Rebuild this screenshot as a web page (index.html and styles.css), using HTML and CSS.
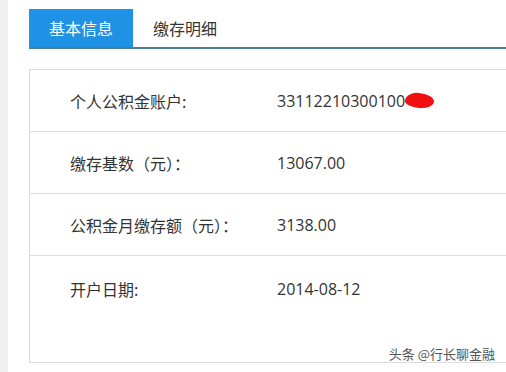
FILE: index.html
```html
<!DOCTYPE html>
<html lang="zh-CN">
<head>
<meta charset="utf-8">
<title>基本信息</title>
<link rel="stylesheet" href="styles.css">
</head>
<body>
<div class="page">
  <div class="strip"></div>
  <main class="main">
    <nav class="tabs">
      <div class="tab active">基本信息</div>
      <div class="tab">缴存明细</div>
    </nav>
    <section class="panel">
      <div class="row">
        <div class="label">个人公积金账户:</div>
        <div class="value">33112210300100<span class="scribble"></span></div>
      </div>
      <div class="row">
        <div class="label">缴存基数（元）：</div>
        <div class="value">13067.00</div>
      </div>
      <div class="row">
        <div class="label">公积金月缴存额（元）：</div>
        <div class="value">3138.00</div>
      </div>
      <div class="row last">
        <div class="label">开户日期:</div>
        <div class="value">2014-08-12</div>
      </div>
      <div class="watermark">头条 @行长聊金融</div>
    </section>
  </main>
</div>
</body>
</html>
```
FILE: styles.css
```css
* { box-sizing: border-box; }
html, body {
  margin: 0;
  padding: 0;
  background: #fff;
  width: 506px;
  height: 372px;
  overflow: hidden;
}
body {
  font-family: "Open Sans", "Noto Sans CJK SC", sans-serif;
  color: #333;
}
.page {
  display: flex;
  height: 372px;
}
.strip {
  width: 8px;
  flex: none;
  background: #efefef;
}
.main {
  flex: 1;
  padding: 9px 0 0 21px;
  overflow: hidden;
}
.tabs {
  display: flex;
  border-bottom: 2px solid #4b7f94;
}
.tab {
  height: 38px;
  padding: 0 20px;
  font-family: "Noto Sans CJK SC", sans-serif;
  font-size: 16px;
  line-height: 38px;
  color: #333;
}
.tab.active {
  background: #1f92e6;
  color: #fff;
}
.panel {
  display: flex;
  flex-direction: column;
  margin-top: 20px;
  height: 294px;
  border: 1px solid #dcdcdc;
  border-right: none;
}
.row {
  display: flex;
  align-items: center;
  height: 62px;
  flex: none;
  padding-left: 40px;
  border-bottom: 1px solid #dedede;
  font-size: 16px;
}
.row.last {
  border-bottom: none;
  height: 66px;
}
.label {
  width: 207px;
  flex: none;
  font-family: "Noto Sans CJK SC", sans-serif;
  color: #333;
}
.value {
  display: flex;
  align-items: center;
  color: #333;
}
.scribble {
  display: inline-block;
  width: 29px;
  height: 15px;
  background: #f01010;
  border-radius: 45% 55% 50% 50% / 60% 50% 50% 40%;
  transform: rotate(5deg);
}
.watermark {
  align-self: flex-end;
  margin-top: 23px;
  margin-right: 11px;
  font-family: "Noto Sans CJK SC", sans-serif;
  font-size: 13px;
  line-height: 18px;
  color: #555;
  white-space: nowrap;
}
```
